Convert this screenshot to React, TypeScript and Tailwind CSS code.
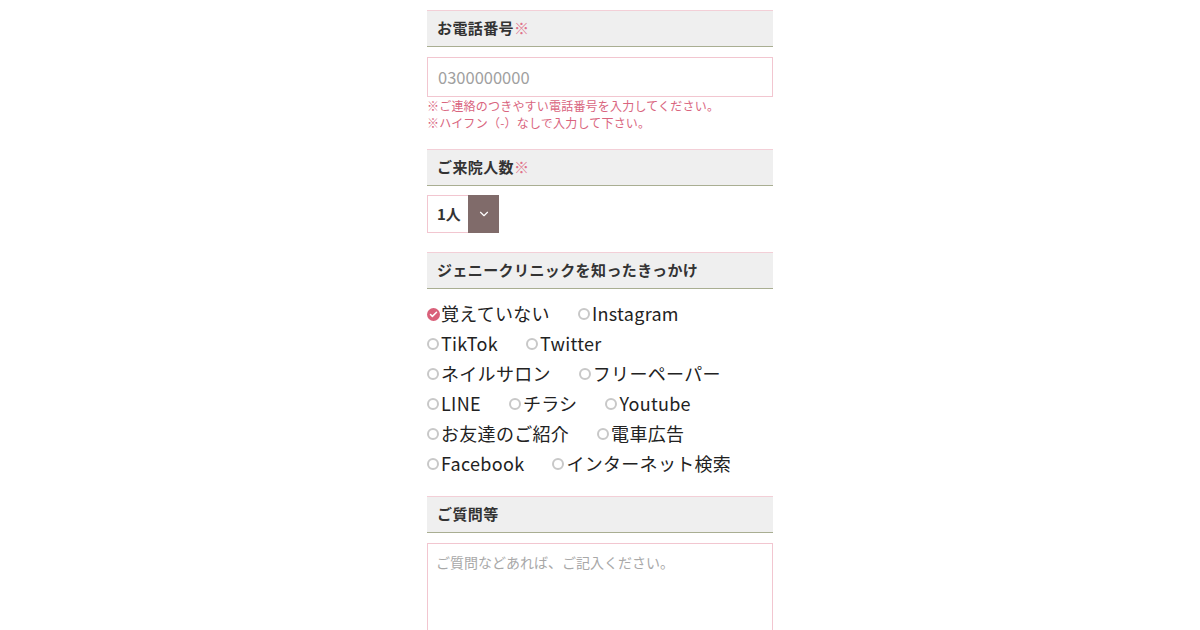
import { Check, ChevronDown } from 'lucide-react';

const rows: string[][] = [
  ['覚えていない', 'Instagram'],
  ['TikTok', 'Twitter'],
  ['ネイルサロン', 'フリーペーパー'],
  ['LINE', 'チラシ', 'Youtube'],
  ['お友達のご紹介', '電車広告'],
  ['Facebook', 'インターネット検索'],
];

function SectionHead({ label, required }: { label: string; required?: boolean }) {
  return (
    <div className="h-[37px] flex items-center pl-[10px] bg-[#efefef] border-t border-t-[#f3cfd7] border-b border-b-[#a9ae92]">
      <span className="text-[15px] font-bold text-[#333] tracking-[0.4px]">
        {label}
        {required && <span className="text-[#e0728a] font-normal">※</span>}
      </span>
    </div>
  );
}

function Radio({ label, checked }: { label: string; checked?: boolean }) {
  return (
    <label className="flex items-center mr-[28px]">
      {checked ? (
        <span className="w-[13px] h-[13px] mt-[2px] rounded-full bg-[#d9607a] flex items-center justify-center mr-[1px]">
          <Check size={9} strokeWidth={4} className="text-white" />
        </span>
      ) : (
        <span className="w-[12px] h-[12px] mt-[2px] rounded-full border-2 border-[#c8c8c8] bg-white mr-[2px]" />
      )}
      <span className="text-[18px] text-[#222] leading-[30px] tracking-[0.3px]">{label}</span>
    </label>
  );
}

export default function App() {
  return (
    <div
      className="w-[1200px] h-[630px] bg-white overflow-hidden"
      style={{ fontFamily: '"Noto Sans CJK JP", "Noto Sans", sans-serif' }}
    >
      <div className="w-[346px] mx-auto pt-[10px]">
        <SectionHead label="お電話番号" required />
        <div className="mt-[10px] h-[40px] border border-[#f2c6d0] flex items-center pl-[10px]">
          <span className="text-[16.5px] text-[#a0a0a0]">0300000000</span>
        </div>
        <div className="text-[12px] leading-[17px] text-[#d9657e] tracking-[0.2px]">
          <p>※ご連絡のつきやすい電話番号を入力してください。</p>
          <p>※ハイフン（-）なしで入力して下さい。</p>
        </div>

        <div className="mt-[18px]">
          <SectionHead label="ご来院人数" required />
        </div>
        <div className="mt-[9px] flex h-[38px] w-[72px]">
          <div className="w-[41px] border border-[#f2c6d0] border-r-0 flex items-center pl-[9px]">
            <span className="text-[15px] font-bold text-[#333]">1人</span>
          </div>
          <div className="w-[31px] bg-[#806b6a] flex items-center justify-center">
            <ChevronDown size={14} strokeWidth={2} className="text-white" />
          </div>
        </div>

        <div className="mt-[19px]">
          <SectionHead label="ジェニークリニックを知ったきっかけ" />
        </div>
        <div className="mt-[9px] flex flex-col">
          {rows.map((row, i) => (
            <div key={i} className="flex h-[30px] items-center">
              {row.map((label, j) => (
                <Radio key={label} label={label} checked={i === 0 && j === 0} />
              ))}
            </div>
          ))}
        </div>

        <div className="mt-[18px]">
          <SectionHead label="ご質問等" />
        </div>
        <div className="mt-[10px] h-[120px] border border-[#f2c6d0] pl-[8px] pt-[5px]">
          <span className="text-[14px] text-[#a8a8a8]">ご質問などあれば、ご記入ください。</span>
        </div>
      </div>
    </div>
  );
}
